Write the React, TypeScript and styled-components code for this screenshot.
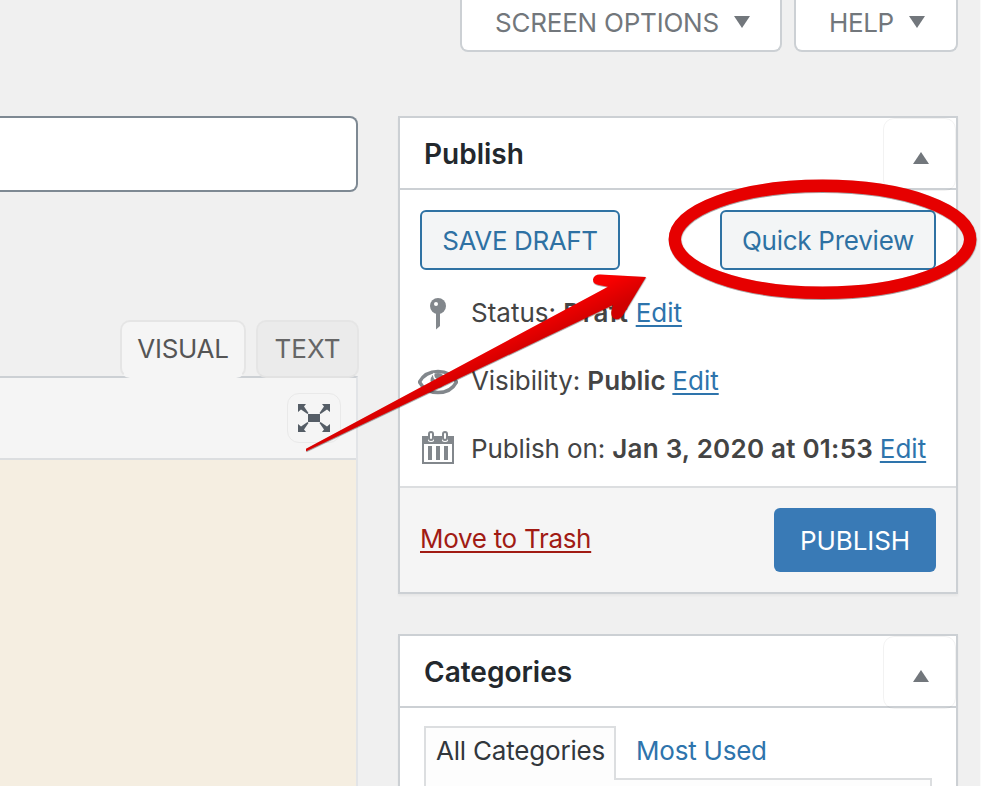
import React from "react";
import styled, { createGlobalStyle } from "styled-components";

const Global = createGlobalStyle`
  *{box-sizing:border-box}
  html,body{margin:0;height:786px;overflow:hidden;background:#f0f0f0}
  body{font-family:Inter,"Liberation Sans",sans-serif;font-size:26px;color:#444;}
`;

const Page = styled.div`
  position: relative;
  width: 981px;
  height: 786px;
  overflow: hidden;
  background: #f0f0f0;
  border-right: 1px solid #fafafa;
`;
const ScreenMeta = styled.div`
  display: flex;
  justify-content: flex-end;
  gap: 12px;
  height: 52px;
  padding-right: 22px;
`;
const MetaButton = styled.div<{ $w: number }>`
  width: ${(p) => p.$w}px;
  display: flex;
  align-items: center;
  gap: 15px;
  padding: 0 0 4px 33px;
  background: #fff;
  border: 2px solid #ccd0d4;
  border-top: 0;
  border-radius: 0 0 8px 8px;
  color: #72777c;

  svg {
    margin-bottom: 2px;
  }
`;
const Columns = styled.div`
  display: flex;
  gap: 40px;
  padding-top: 64px;
`;
const EditorColumn = styled.div`
  width: 358px;
`;
const TitleInput = styled.div`
  height: 76px;
  background: #fff;
  border: 2px solid #7e8993;
  border-left: 0;
  border-radius: 0 8px 8px 0;
`;
const EditorTabs = styled.div`
  display: flex;
  justify-content: flex-end;
  gap: 10px;
  margin: 128px -1px 0 0;
  height: 58px;
  position: relative;
  z-index: 1;
`;
const EditorTab = styled.div<{ $w: number; $active?: boolean }>`
  width: ${(p) => p.$w}px;
  height: 58px;
  display: flex;
  align-items: center;
  justify-content: center;
  border: 2px solid #e5e5e5;
  border-bottom-color: ${(p) => (p.$active ? "#f5f5f5" : "#e2e2e2")};
  border-radius: 10px;
  background: ${(p) => (p.$active ? "#f5f5f5" : "#ebebeb")};
  color: ${(p) => (p.$active ? "#555" : "#666")};
`;
const Editor = styled.div`
  height: 420px;
  margin-top: -2px;
  border: 2px solid #ccd0d4;
  border-left: 0;
  border-right-color: #e2e4e7;
  background: #f5eee1;
`;
const Toolbar = styled.div`
  height: 82px;
  display: flex;
  justify-content: flex-end;
  padding: 15px 15px 0;
  background: #f5f5f5;
  border-bottom: 2px solid #dcdee0;
`;
const ToolButton = styled.div`
  width: 54px;
  height: 50px;
  display: flex;
  align-items: center;
  justify-content: center;
  border: 1px solid #e9e9e9;
  border-radius: 12px;
`;
const Sidebar = styled.div`
  width: 560px;
  display: flex;
  flex-direction: column;
  gap: 40px;
`;
const Panel = styled.section<{ $h: number }>`
  height: ${(p) => p.$h}px;
  background: #fff;
  border: 2px solid #ccd0d4;
  box-shadow: 0 2px 2px rgba(0, 0, 0, 0.04);
`;
const PanelHeader = styled.header`
  height: 72px;
  display: flex;
  align-items: center;
  justify-content: space-between;
  padding-left: 24px;
  border-bottom: 2px solid #ccd0d4;
`;
const PanelTitle = styled.h2`
  margin: 0;
  padding-top: 2px;
  font-size: 28px;
  font-weight: 600;
  line-height: 34px;
  color: #23282d;
`;
const Toggle = styled.div`
  width: 73px;
  height: 73px;
  margin-bottom: -2px;
  display: flex;
  align-items: center;
  justify-content: center;
  padding: 8px 0 0 2px;
  border: 1px solid rgba(0, 0, 0, 0.05);
  border-radius: 11px;
`;
const ActionRow = styled.div`
  display: flex;
  justify-content: space-between;
  padding: 20px 20px 0;
  height: 89px;
`;
const OutlineButton = styled.button<{ $w: number }>`
  width: ${(p) => p.$w}px;
  height: 60px;
  padding: 2px 0 0;
  border: 2px solid #2f72a3;
  border-radius: 6px;
  background: #f3f5f6;
  color: #2e71a3;
  font: inherit;
`;
const InfoRow = styled.div`
  display: flex;
  align-items: center;
  height: 68px;
  padding-left: 18px;
`;
const IconSlot = styled.span`
  width: 40px;
  height: 40px;
  display: flex;
  align-items: center;
  justify-content: center;
  margin-right: 13px;
`;
const Text = styled.span<{ $ls?: number }>`
  letter-spacing: ${(p) => p.$ls ?? 0}px;
  white-space: pre;
  line-height: 32px;
`;
const Bold = styled(Text)`
  font-weight: 600;
`;
const Link = styled.a`
  color: #2e74ac;
  text-decoration: underline;
  text-decoration-thickness: 2px;
  text-underline-offset: 3px;
  text-decoration-skip-ink: none;
  line-height: 32px;
  white-space: pre;
`;
const TrashLink = styled(Link)`
  margin-bottom: 3px;
  letter-spacing: -0.3px;
  color: #a11b14;
`;
const PanelFooter = styled.footer`
  height: 106px;
  margin-top: 3px;
  display: flex;
  align-items: center;
  justify-content: space-between;
  padding: 0 20px;
  background: #f5f5f5;
  border-top: 2px solid #dcdee0;
`;
const PublishButton = styled.button`
  width: 162px;
  height: 64px;
  padding: 2px 0 0;
  border: 0;
  border-radius: 6px;
  background: #397ab6;
  color: #fff;
  font: inherit;
`;
const CategoryTabs = styled.div`
  display: flex;
  align-items: flex-start;
  padding: 18px 24px 0;
  height: 72px;
`;
const CategoryTab = styled.div`
  width: 192px;
  height: 54px;
  padding: 7px 0 0 10px;
  border: 2px solid #dcdee0;
  border-bottom: 0;
  background: #fdfdfd;
  color: #32373c;
  position: relative;
  z-index: 1;
`;
const MostUsed = styled.div`
  padding: 9px 0 0 20px;
  color: #2e74ac;
`;
const CategoryList = styled.div`
  width: 508px;
  height: 60px;
  margin: -2px 0 0 24px;
  border: 2px solid #dcdee0;
  background: #fdfdfd;
`;
const Annotation = styled.svg`
  position: absolute;
  top: 0;
  left: 0;
  z-index: 5;
`;

const Down = () => (
  <svg width="16" height="12" viewBox="0 0 16 12"><path d="M0 0h16L8 12z" fill="#72777c" /></svg>
);
const Up = () => (
  <svg width="16" height="12" viewBox="0 0 16 12"><path d="M0 12h16L8 0z" fill="#72777c" /></svg>
);
const Expand = () => (
  <svg width="32" height="28" viewBox="0 0 32 28" fill="#555d66">
    <path d="M10 10h12v8H10zM0 0h8L6 2.500 10.500 9 9.500 10 3 5.500 0 8zM32 0h-8l2 2.500L21.500 9l1 1L29 5.500 32 8zM0 28h8l-2-2.500 4.500-6.500-1-1L3 22.500 0 20zM32 28h-8l2-2.500-4.500-6.500 1-1 6.500 4.500 3-2.500z" />
  </svg>
);
const Pin = () => (
  <svg width="40" height="40" viewBox="0 0 40 40">
    <circle cx="20" cy="13" r="8" fill="#82878c" />
    <path d="M18 19h4v14l-4 3.500z" fill="#82878c" />
    <circle cx="18" cy="11" r="2" fill="#fff" />
  </svg>
);
const Eye = () => (
  <svg width="40" height="40" viewBox="0 0 40 40">
    <path d="M1.500 21C9 7 31 7 38.500 21C31 35 9 35 1.500 21z" fill="none" stroke="#82878c" strokeWidth="3.500" />
    <circle cx="20" cy="19.500" r="7.500" fill="#82878c" />
    <path d="M16 12a5 5 0 0 0 4 7" fill="none" stroke="#fff" strokeWidth="1.500" />
  </svg>
);
const Calendar = () => (
  <svg width="40" height="40" viewBox="0 0 40 40" fill="#82878c">
    <path fillRule="evenodd" d="M4 7h32v28H4zM6 15v18h28V15z" />
    <rect x="9" y="1" width="8" height="12" rx="4" fill="#fff" />
    <rect x="23" y="1" width="8" height="12" rx="4" fill="#fff" />
    <path d="M4 7h6v8H4zM16 7h8v8h-8zM30 7h6v8h-6z" />
    <path fillRule="evenodd" d="M10 5a3 3 0 0 1 6 0v4a3 3 0 0 1-6 0zm2 0v4a1 1 0 0 0 2 0V5a1 1 0 0 0-2 0zM24 5a3 3 0 0 1 6 0v4a3 3 0 0 1-6 0zm2 0v4a1 1 0 0 0 2 0V5a1 1 0 0 0-2 0z" />
    <path d="M10 17h4v14h-4zM18 17h4v14h-4zM26 17h4v14h-4z" />
  </svg>
);

export default function App() {
  return (
    <>
      <Global />
      <Page>
        <ScreenMeta>
          <MetaButton $w={322}><Text $ls={-0.22}>SCREEN OPTIONS</Text><Down /></MetaButton>
          <MetaButton $w={164}><Text $ls={-0.35}>HELP</Text><Down /></MetaButton>
        </ScreenMeta>
        <Columns>
          <EditorColumn>
            <TitleInput />
            <EditorTabs>
              <EditorTab $w={126} $active><Text $ls={-0.3}>VISUAL</Text></EditorTab>
              <EditorTab $w={103}><Text>TEXT</Text></EditorTab>
            </EditorTabs>
            <Editor>
              <Toolbar><ToolButton><Expand /></ToolButton></Toolbar>
            </Editor>
          </EditorColumn>
          <Sidebar>
            <Panel $h={478}>
              <PanelHeader><PanelTitle>Publish</PanelTitle><Toggle><Up /></Toggle></PanelHeader>
              <ActionRow>
                <OutlineButton $w={200}><Text $ls={-0.38}>SAVE DRAFT</Text></OutlineButton>
                <OutlineButton $w={216}><Text $ls={-0.25}>Quick Preview</Text></OutlineButton>
              </ActionRow>
              <InfoRow><IconSlot><Pin /></IconSlot><Text>Status: </Text><Bold $ls={0.62}>Draft </Bold><Link>Edit</Link></InfoRow>
              <InfoRow><IconSlot><Eye /></IconSlot><Text $ls={-0.1}>Visibility: </Text><Bold $ls={0.12}>Public </Bold><Link>Edit</Link></InfoRow>
              <InfoRow><IconSlot><Calendar /></IconSlot><Text $ls={-0.12}>Publish on: </Text><Bold $ls={0.24}>Jan 3, 2020 at 01:53 </Bold><Link>Edit</Link></InfoRow>
              <PanelFooter><TrashLink>Move to Trash</TrashLink><PublishButton><Text $ls={-0.1}>PUBLISH</Text></PublishButton></PanelFooter>
            </Panel>
            <Panel $h={300}>
              <PanelHeader><PanelTitle>Categories</PanelTitle><Toggle><Up /></Toggle></PanelHeader>
              <CategoryTabs>
                <CategoryTab><Text $ls={-0.2}>All Categories</Text></CategoryTab>
                <MostUsed><Text $ls={-0.22}>Most Used</Text></MostUsed>
              </CategoryTabs>
              <CategoryList />
            </Panel>
          </Sidebar>
        </Columns>
        <Annotation width="981" height="786" viewBox="0 0 981 786">
          <defs>
            <linearGradient id="arrow" gradientUnits="userSpaceOnUse" x1="468" y1="348" x2="480" y2="373">
              <stop offset="0" stopColor="#f80404" /><stop offset="1" stopColor="#d00000" />
            </linearGradient>
            <filter id="shade" x="-20%" y="-20%" width="140%" height="140%">
              <feDropShadow dx="0.300" dy="0.700" stdDeviation="0.600" floodColor="#000" floodOpacity="0.550" />
            </filter>
          </defs>
          <ellipse cx="822.500" cy="239.300" rx="147.700" ry="53.500" fill="none" stroke="#e60404" strokeWidth="12.400" filter="url(#shade)" />
          <path d="M306 448.800L608 286.700L599 285Q593 284 593 279.500Q594 274.500 600 274.500L646 277L623 315Q620 320 615 319Q610.500 317 611.500 311L613 305L306 451.200Z" fill="url(#arrow)" filter="url(#shade)" />
        </Annotation>
      </Page>
    </>
  );
}
